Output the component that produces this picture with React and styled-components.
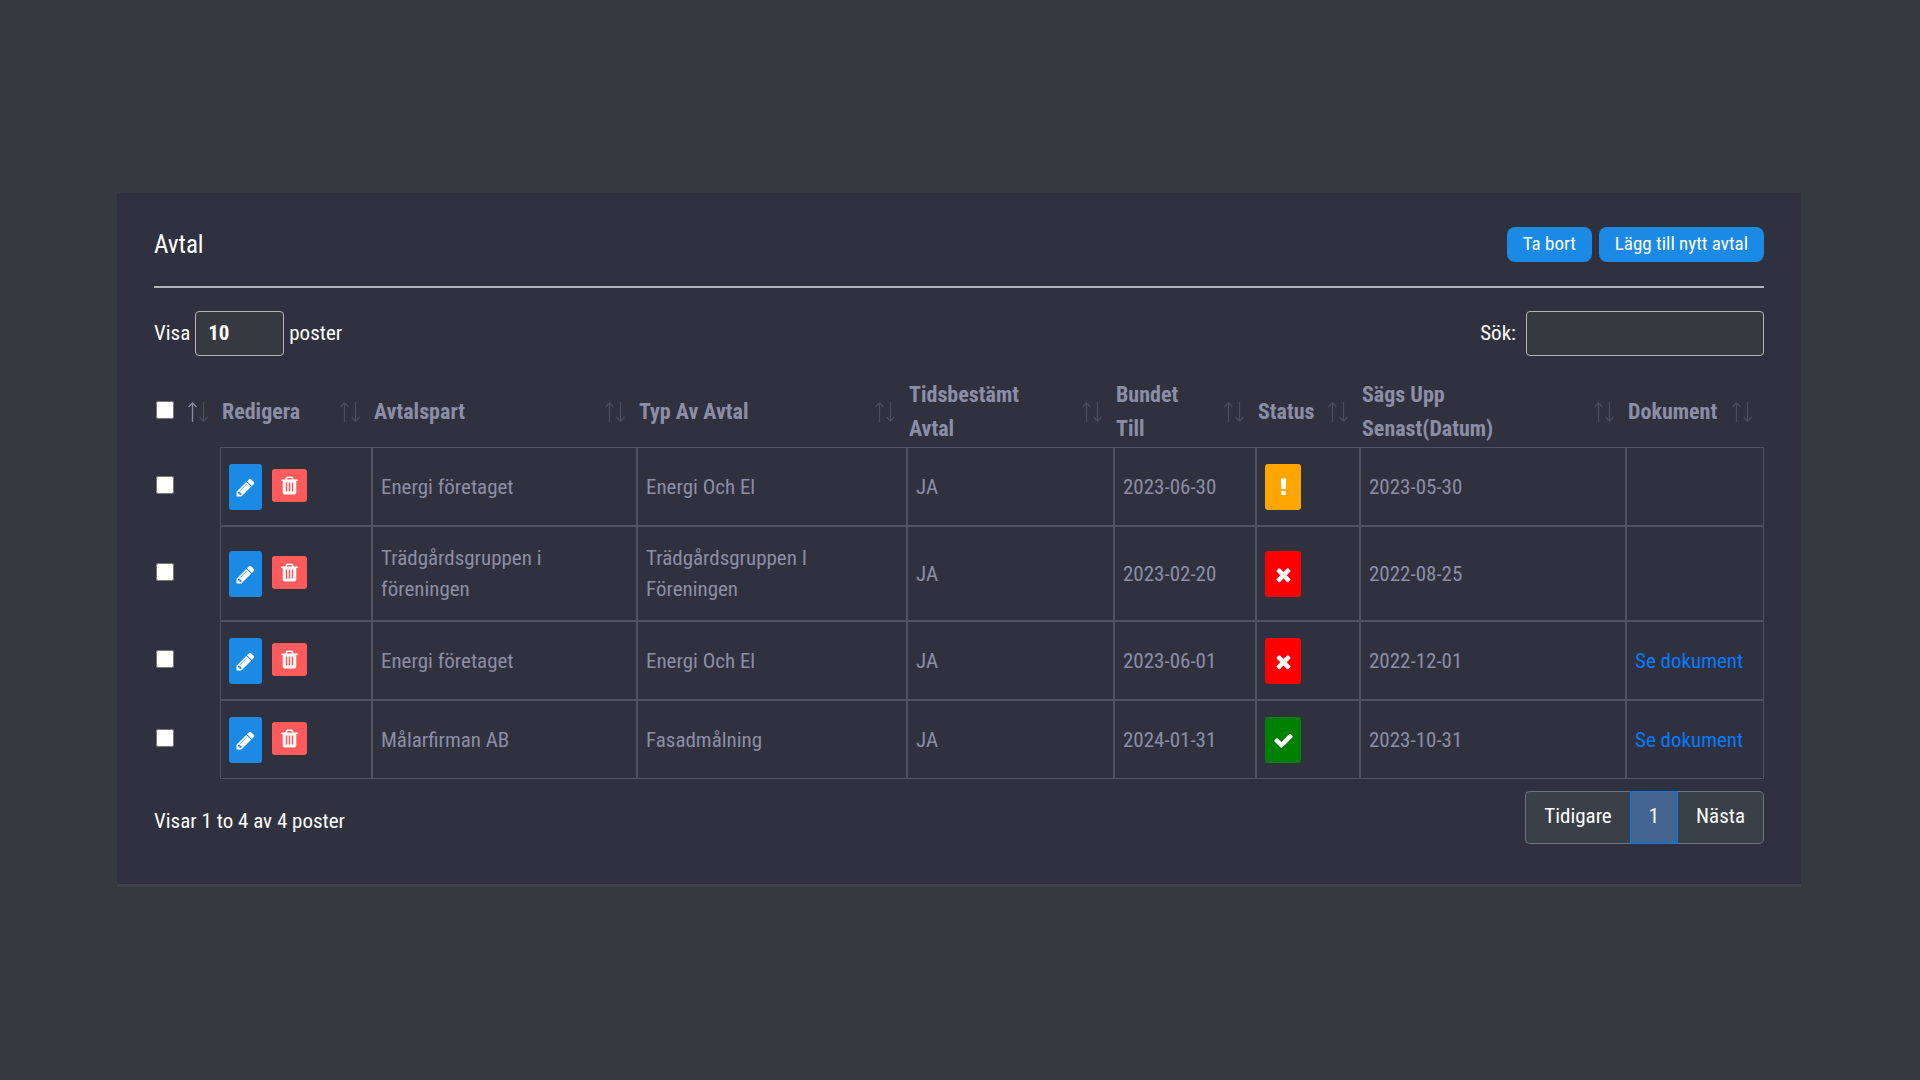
import React from "react";
import styled, { createGlobalStyle } from "styled-components";

const GlobalStyle = createGlobalStyle`
  *, *::before, *::after { box-sizing: border-box; }
  body {
    margin: 0;
    background: #343a40;
    color: #fff;
    font-family: "Roboto Condensed", "Liberation Sans Narrow", "Arial Narrow", Roboto, sans-serif;
    font-size: 21px;
    line-height: 31px;
  }
  button, input, select { font: inherit; color: inherit; }
`;

const Page = styled.main`
  display: flex;
  align-items: center;
  min-height: 100vh;
  padding: 24px 119px 24px 117px;
`;

const Card = styled.section`
  flex: 1;
  min-width: 0;
  padding: 34px 37px 40px;
  background: #30313e;
  border-bottom: 3px solid #3d4149;
`;

const CardHeader = styled.header`
  display: flex;
  justify-content: space-between;
  padding-bottom: 23px;
  border-bottom: 2px solid #b2b4b9;
`;

const Title = styled.h1`
  margin: 0;
  font-size: 25px;
  font-weight: 400;
  line-height: 36px;
`;

const Actions = styled.div`
  display: flex;
  gap: 7px;
`;

const ActionButton = styled.button`
  height: 35px;
  padding: 0 16px 2px;
  border: 0;
  border-radius: 8px;
  background: #1b8ae4;
  color: #fff;
  font-size: 19px;
  line-height: 33px;
`;

const Controls = styled.div`
  display: flex;
  justify-content: space-between;
  align-items: center;
  padding: 23px 0 22px;
`;

const Control = styled.label`
  display: flex;
  align-items: center;
  gap: ${(p) => p.$gap}px;
`;

const LengthSelect = styled.select`
  appearance: none;
  width: 89px;
  height: 45px;
  padding: 0 12px;
  border: 1px solid #b5b5b5;
  border-radius: 4px;
  background: #353a40;
  color: #fff;
  font-weight: 700;
`;

const SearchInput = styled.input`
  appearance: none;
  width: 238px;
  height: 45px;
  padding: 0 12px;
  border: 1px solid #b5b5b5;
  border-radius: 4px;
  background: #353a40;
`;

const Table = styled.table`
  width: 100%;
  table-layout: fixed;
  border-collapse: separate;
  border-spacing: 0;
  color: #8a8fa6;
`;

const HeadCell = styled.th`
  padding: 0 12px 1px 2px;
  text-align: left;
  vertical-align: middle;
  font-size: 22px;
  line-height: 34px;
`;

const HeadContent = styled.div`
  display: flex;
  align-items: center;
  justify-content: space-between;
`;

const Cell = styled.td`
  padding: 16px 4px 15px 8px;
  border: 1px solid #50545f;
  vertical-align: middle;
`;

const SelectCell = styled.td`
  padding: 0 0 4px 2px;
  vertical-align: middle;
`;

const Checkbox = styled.input`
  display: block;
  width: 18px;
  height: 18px;
  margin: 0;
`;

const SelectAll = styled(Checkbox)`
  margin-bottom: 4px;
`;

const RowButtons = styled.div`
  display: flex;
  align-items: center;
  gap: 10px;
`;

const IconButton = styled.button`
  display: flex;
  align-items: center;
  justify-content: center;
  width: ${(p) => (p.$danger ? 35 : 33)}px;
  height: ${(p) => (p.$danger ? 33 : 46)}px;
  margin: 0 0 ${(p) => (p.$danger ? 4 : 0)}px;
  padding: 0;
  border: 0;
  border-radius: 3px;
  background: ${(p) => (p.$danger ? "#ff5b5c" : "#1b8ae4")};
  color: #fff;
`;

const StatusBadge = styled.span`
  display: flex;
  align-items: center;
  justify-content: center;
  width: 36px;
  height: 46px;
  border-radius: 3px;
  background: ${(p) => p.$color};
  color: #fff;
`;

const DocumentLink = styled.a`
  color: #007bff;
  text-decoration: none;
`;

const Footer = styled.footer`
  display: flex;
  justify-content: space-between;
  padding-top: 12px;
`;

const Info = styled.p`
  margin: 0;
  padding-top: 15px;
`;

const Pagination = styled.nav`
  display: flex;
`;

const PageButton = styled.button`
  height: 53px;
  padding: 0 18px 2px;
  border: 1px solid ${(p) => (p.$active ? "#007bff" : "#6c757d")};
  border-left-width: ${(p) => (p.$edge === "right" ? 0 : 1)}px;
  border-right-width: ${(p) => (p.$edge === "left" ? 0 : 1)}px;
  border-radius: ${(p) =>
    p.$edge === "left" ? "5px 0 0 5px" : p.$edge === "right" ? "0 5px 5px 0" : "0"};
  background: ${(p) => (p.$active ? "#42648f" : "#3a4047")};
  color: #fff;
`;

const glyphs = {
  pencil:
    "M491 1536l91-91-235-235-91 91v107h128v128h107zM1014 608q0-22-22-22-10 0-17 7l-542 542q-7 7-7 17 0 22 22 22 10 0 17-7l542-542q7-7 7-17zM960 416l416 416-832 832h-416v-416zM1643 512q0 53-37 90l-166 166-416-416 166-165q36-38 90-38 53 0 91 38l235 234q37 39 37 91z",
  trash:
    "M704 1376v-704q0-14-9-23t-23-9h-64q-14 0-23 9t-9 23v704q0 14 9 23t23 9h64q14 0 23-9t9-23zm256 0v-704q0-14-9-23t-23-9h-64q-14 0-23 9t-9 23v704q0 14 9 23t23 9h64q14 0 23-9t9-23zm256 0v-704q0-14-9-23t-23-9h-64q-14 0-23 9t-9 23v704q0 14 9 23t23 9h64q14 0 23-9t9-23zm-544-992h448l-48-117q-7-9-17-11h-317q-10 2-17 11zm928 32v64q0 14-9 23t-23 9h-96v948q0 83-47 143.5t-113 60.5h-832q-66 0-113-58.5t-47-141.5v-952h-96q-14 0-23-9t-9-23v-64q0-14 9-23t23-9h309l70-167q15-37 54-63t79-26h320q40 0 79 26t54 63l70 167h309q14 0 23 9t9 23z",
  times:
    "M1490 1322q0 40-28 68l-136 136q-28 28-68 28t-68-28l-294-294-294 294q-28 28-68 28t-68-28l-136-136q-28-28-28-68t28-68l294-294-294-294q-28-28-28-68t28-68l136-136q28-28 68-28t68 28l294 294 294-294q28-28 68-28t68 28l136 136q28 28 28 68t-28 68l-294 294 294 294q28 28 28 68z",
  check:
    "M1671 566q0 40-28 68l-724 724-136 136q-28 28-68 28t-68-28l-136-136-362-362q-28-28-28-68t28-68l136-136q28-28 68-28t68 28l294 295 656-657q28-28 68-28t68 28l136 136q28 28 28 68z",
  exclamation:
    "M1088 1248v224q0 26-19 45t-45 19h-256q-26 0-45-19t-19-45v-224q0-26 19-45t45-19h256q26 0 45 19t19 45zm30-1056l-28 768q-1 26-20.5 45t-45.5 19h-256q-26 0-45.5-19t-20.5-45l-28-768q-1-26 17.5-45t44.5-19h320q26 0 44.5 19t17.5 45z",
};

const Icon = ({ name }) => (
  <svg width="21" height="21" viewBox="0 0 1792 1792" fill="currentColor" aria-hidden="true">
    <path d={glyphs[name]} />
  </svg>
);

const SortIcon = ({ ascending }) => (
  <svg width="20" height="20" viewBox="0 0 20 20" fill="none" stroke="#8a8fa6" strokeWidth="1.3" aria-hidden="true">
    <path d="M4.5 20V1M0.5 5L4.5 1L8.5 5" opacity={ascending ? 1 : 0.3} />
    <path d="M15.5 0V19M11.5 15L15.5 19L19.5 15" opacity="0.3" />
  </svg>
);

const statuses = {
  warning: { color: "#ffa500", icon: "exclamation", label: "Varning" },
  expired: { color: "#ff0000", icon: "times", label: "Utgånget" },
  active: { color: "#008000", icon: "check", label: "Aktivt" },
};

const columnWidths = [66, 152, 265, 270, 207, 142, 104, 266, 138];

const headings = [
  ["Redigera"],
  ["Avtalspart"],
  ["Typ Av Avtal"],
  ["Tidsbestämt", "Avtal"],
  ["Bundet", "Till"],
  ["Status"],
  ["Sägs Upp", "Senast(Datum)"],
  ["Dokument"],
];

const contracts = [
  { party: ["Energi företaget"], type: ["Energi Och El"], fixed: "JA", until: "2023-06-30", status: "warning", notice: "2023-05-30" },
  { party: ["Trädgårdsgruppen i", "föreningen"], type: ["Trädgårdsgruppen I", "Föreningen"], fixed: "JA", until: "2023-02-20", status: "expired", notice: "2022-08-25" },
  { party: ["Energi företaget"], type: ["Energi Och El"], fixed: "JA", until: "2023-06-01", status: "expired", notice: "2022-12-01", document: true },
  { party: ["Målarfirman AB"], type: ["Fasadmålning"], fixed: "JA", until: "2024-01-31", status: "active", notice: "2023-10-31", document: true },
];

const Lines = ({ lines }) => (
  <span>
    {lines.map((line, i) => (
      <React.Fragment key={line}>
        {i > 0 && <br />}
        {line}
      </React.Fragment>
    ))}
  </span>
);

export default function App() {
  return (
    <>
      <GlobalStyle />
      <Page>
        <Card>
          <CardHeader>
            <Title>Avtal</Title>
            <Actions>
              <ActionButton type="button">Ta bort</ActionButton>
              <ActionButton type="button">Lägg till nytt avtal</ActionButton>
            </Actions>
          </CardHeader>
          <Controls>
            <Control htmlFor="length" $gap={5}>
              Visa
              <LengthSelect id="length" defaultValue="10">
                <option>10</option>
                <option>25</option>
                <option>50</option>
              </LengthSelect>
              poster
            </Control>
            <Control htmlFor="search" $gap={10}>
              Sök:
              <SearchInput id="search" type="search" />
            </Control>
          </Controls>
          <Table>
            <colgroup>
              {columnWidths.map((width, i) => (
                <col key={i} style={{ width }} />
              ))}
            </colgroup>
            <thead>
              <tr>
                <HeadCell aria-sort="ascending">
                  <HeadContent>
                    <SelectAll type="checkbox" aria-label="Markera alla" />
                    <SortIcon ascending />
                  </HeadContent>
                </HeadCell>
                {headings.map((lines) => (
                  <HeadCell key={lines[0]} scope="col">
                    <HeadContent>
                      <Lines lines={lines} />
                      <SortIcon />
                    </HeadContent>
                  </HeadCell>
                ))}
              </tr>
            </thead>
            <tbody>
              {contracts.map((c, i) => (
                <tr key={i}>
                  <SelectCell>
                    <Checkbox type="checkbox" aria-label={`Markera rad ${i + 1}`} />
                  </SelectCell>
                  <Cell>
                    <RowButtons>
                      <IconButton type="button" aria-label="Redigera">
                        <Icon name="pencil" />
                      </IconButton>
                      <IconButton type="button" aria-label="Ta bort" $danger>
                        <Icon name="trash" />
                      </IconButton>
                    </RowButtons>
                  </Cell>
                  <Cell><Lines lines={c.party} /></Cell>
                  <Cell><Lines lines={c.type} /></Cell>
                  <Cell>{c.fixed}</Cell>
                  <Cell>{c.until}</Cell>
                  <Cell>
                    <StatusBadge $color={statuses[c.status].color} role="img" aria-label={statuses[c.status].label}>
                      <Icon name={statuses[c.status].icon} />
                    </StatusBadge>
                  </Cell>
                  <Cell>{c.notice}</Cell>
                  <Cell>{c.document && <DocumentLink href="#dokument">Se dokument</DocumentLink>}</Cell>
                </tr>
              ))}
            </tbody>
          </Table>
          <Footer>
            <Info>Visar 1 to 4 av 4 poster</Info>
            <Pagination aria-label="Sidor">
              <PageButton type="button" $edge="left">Tidigare</PageButton>
              <PageButton type="button" $active aria-current="page">1</PageButton>
              <PageButton type="button" $edge="right">Nästa</PageButton>
            </Pagination>
          </Footer>
        </Card>
      </Page>
    </>
  );
}
